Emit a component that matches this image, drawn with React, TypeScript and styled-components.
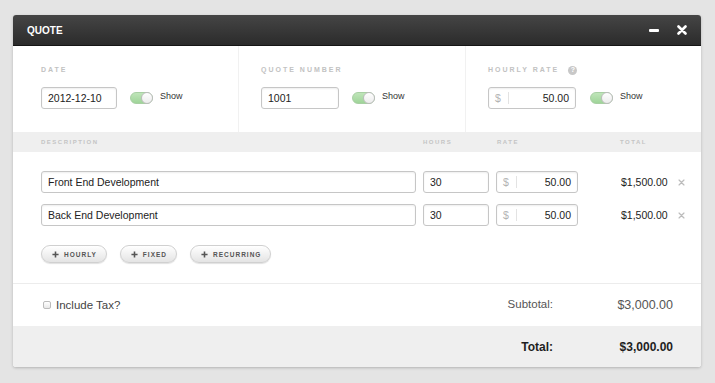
import React from 'react';
import styled, { createGlobalStyle } from 'styled-components';

const GlobalStyle = createGlobalStyle`
	body {
		margin: 0;
		background: #e4e4e4;
		font-family: 'Liberation Sans', Arial, sans-serif;
	}
`;

const Page = styled.div`
	padding: 15px 14px 16px 13px;
`;

const Window = styled.div`
	width: 688px;
	background: #fff;
	border-radius: 3px;
	box-shadow: 0 1px 3px rgba(0, 0, 0, 0.22);
	overflow: hidden;
`;

const TitleBar = styled.div`
	box-sizing: border-box;
	height: 31px;
	display: flex;
	align-items: center;
	justify-content: space-between;
	padding: 0 14px;
	background: linear-gradient(#454545, #2b2b2b);
	border-bottom: 1px solid #151515;
`;

const Title = styled.span`
	color: #fff;
	font-size: 10px;
	font-weight: bold;
`;

const WindowControls = styled.div`
	display: flex;
	align-items: center;
	gap: 18px;
`;

const Minimize = styled.span`
	width: 10px;
	height: 3px;
	background: #fff;
	border-radius: 1px;
`;

const TopSection = styled.div`
	display: grid;
	grid-template-columns: 226px 227px 1fr;
	height: 86px;
`;

const SettingColumn = styled.div<{ $pad: number; $last?: boolean }>`
	box-sizing: border-box;
	padding: 20px 0 0 ${(p) => p.$pad}px;
	border-right: ${(p) => (p.$last ? 'none' : '1px solid #f1f1f1')};
`;

const FieldLabel = styled.div`
	display: flex;
	align-items: center;
	gap: 9px;
	height: 8px;
	line-height: 8px;
	margin-bottom: 13px;
	font-size: 7px;
	font-weight: bold;
	letter-spacing: 2px;
	color: #c2c2c2;
`;

const HelpIcon = styled.span`
	width: 9px;
	height: 9px;
	border-radius: 50%;
	background: #c8c8c8;
	color: #fff;
	font-size: 7px;
	letter-spacing: 0;
	display: flex;
	align-items: center;
	justify-content: center;
`;

const FieldRow = styled.div`
	display: flex;
	align-items: center;
`;

const TextInput = styled.input<{ $w: number }>`
	box-sizing: border-box;
	width: ${(p) => p.$w}px;
	height: 22px;
	border: 1px solid #c6c6c6;
	border-radius: 3px;
	padding: 0 6px;
	font-family: inherit;
	font-size: 10.5px;
	color: #222;
	box-shadow: inset 0 1px 2px rgba(0, 0, 0, 0.07);
	outline: none;
`;

const MoneyBox = styled.div<{ $w: number }>`
	box-sizing: border-box;
	width: ${(p) => p.$w}px;
	height: 22px;
	display: flex;
	align-items: center;
	border: 1px solid #c6c6c6;
	border-radius: 3px;
	box-shadow: inset 0 1px 2px rgba(0, 0, 0, 0.07);
	font-size: 10.5px;
`;

const Currency = styled.span`
	box-sizing: border-box;
	width: 20px;
	padding-left: 6px;
	color: #b3b3b3;
	border-right: 1px solid #e3e3e3;
	line-height: 12px;
`;

const MoneyValue = styled.span`
	flex: 1;
	text-align: right;
	padding-right: 6px;
	color: #222;
`;

const Toggle = styled.span<{ $gap: number }>`
	position: relative;
	box-sizing: border-box;
	margin-left: ${(p) => p.$gap}px;
	width: 23px;
	height: 12px;
	border-radius: 6px;
	background: linear-gradient(#bfe5b9, #9fd499);
	border: 1px solid #a8cfa3;
`;

const Knob = styled.span`
	position: absolute;
	right: -1px;
	top: -1px;
	box-sizing: border-box;
	width: 12px;
	height: 12px;
	border-radius: 50%;
	background: linear-gradient(#fff, #ececec);
	border: 1px solid #bdbdbd;
`;

const ShowText = styled.span`
	margin-left: 7px;
	margin-top: -4px;
	font-size: 9px;
	color: #333;
`;

const LineGrid = styled.div`
	display: grid;
	grid-template-columns: 375px 66px 82px 1fr 23px;
	column-gap: 7px;
	align-items: center;
	padding-left: 28px;
`;

const TableHead = styled(LineGrid)`
	height: 20px;
	background: #efefef;
`;

const HeadLabel = styled.span<{ $indent?: number }>`
	padding-left: ${(p) => p.$indent || 0}px;
	font-size: 6px;
	font-weight: bold;
	letter-spacing: 1.5px;
	color: #c4c4c4;
`;

const ItemsSection = styled.div`
	padding: 19px 0 20px;
`;

const ItemList = styled.div`
	display: flex;
	flex-direction: column;
	gap: 11px;
`;

const LineRow = styled(LineGrid)`
	height: 22px;
`;

const LineTotal = styled.span`
	padding-left: 36px;
	font-size: 10.5px;
	color: #222;
`;

const RemoveButton = styled.span`
	display: flex;
	align-items: center;
`;

const ButtonBar = styled.div`
	display: flex;
	gap: 13px;
	padding: 19px 0 0 28px;
`;

const AddButton = styled.span`
	box-sizing: border-box;
	height: 18px;
	display: inline-flex;
	align-items: center;
	gap: 5px;
	padding: 0 9px 0 10px;
	border-radius: 9px;
	border: 1px solid #d0d0d0;
	background: linear-gradient(#ffffff, #e4e4e4);
	box-shadow: 0 1px 1px rgba(0, 0, 0, 0.12);
	font-size: 6.5px;
	font-weight: bold;
	letter-spacing: 1px;
	color: #555;
`;

const SumRow = styled.div<{ $shaded?: boolean }>`
	box-sizing: border-box;
	height: ${(p) => (p.$shaded ? 41 : 43)}px;
	display: flex;
	align-items: center;
	justify-content: space-between;
	padding: 0 28px 0 30px;
	background: ${(p) => (p.$shaded ? '#efefef' : '#fff')};
	border-top: ${(p) => (p.$shaded ? 'none' : '1px solid #ececec')};
`;

const TaxOption = styled.label`
	display: flex;
	align-items: center;
	gap: 5px;
	font-size: 11.5px;
	color: #444;
`;

const CheckBox = styled.input`
	appearance: none;
	margin: 0;
	width: 8px;
	height: 8px;
	border: 1px solid #bbb;
	border-radius: 2px;
	background: linear-gradient(#fff, #e8e8e8);
`;

const Sums = styled.div<{ $bold?: boolean }>`
	margin-left: auto;
	display: grid;
	grid-template-columns: auto 120px;
	text-align: right;
	font-size: ${(p) => (p.$bold ? 12 : 11.5)}px;
	font-weight: ${(p) => (p.$bold ? 'bold' : 'normal')};
	color: ${(p) => (p.$bold ? '#1e1e1e' : '#555')};
`;

const SumValue = styled.span<{ $size?: number }>`
	font-size: ${(p) => p.$size || 12}px;
`;

const CloseIcon = ({ size, color, weight }: { size: number; color: string; weight: number }) => (
	<svg width={size} height={size} viewBox="0 0 10 10">
		<path d="M1.5 1.5 L8.5 8.5 M8.5 1.5 L1.5 8.5" stroke={color} strokeWidth={weight} strokeLinecap="round" />
	</svg>
);

const PlusIcon = () => (
	<svg width="7" height="7" viewBox="0 0 8 8">
		<path d="M4 0.5 V7.5 M0.5 4 H7.5" stroke="#555" strokeWidth="1.8" />
	</svg>
);

const items = [
	{ description: 'Front End Development', hours: '30', rate: '50.00', total: '$1,500.00' },
	{ description: 'Back End Development', hours: '30', rate: '50.00', total: '$1,500.00' },
];

const ShowToggle = ({ gap }: { gap: number }) => (
	<>
		<Toggle $gap={gap}>
			<Knob />
		</Toggle>
		<ShowText>Show</ShowText>
	</>
);

export default function App() {
	return (
		<Page>
			<GlobalStyle />
			<Window>
				<TitleBar>
					<Title>QUOTE</Title>
					<WindowControls>
						<Minimize />
						<CloseIcon size={10} color="#fff" weight={2.6} />
					</WindowControls>
				</TitleBar>

				<TopSection>
					<SettingColumn $pad={28}>
						<FieldLabel>DATE</FieldLabel>
						<FieldRow>
							<TextInput $w={76} defaultValue="2012-12-10" />
							<ShowToggle gap={13} />
						</FieldRow>
					</SettingColumn>
					<SettingColumn $pad={22}>
						<FieldLabel>QUOTE NUMBER</FieldLabel>
						<FieldRow>
							<TextInput $w={78} defaultValue="1001" />
							<ShowToggle gap={13} />
						</FieldRow>
					</SettingColumn>
					<SettingColumn $pad={22} $last>
						<FieldLabel>
							HOURLY RATE
							<HelpIcon>?</HelpIcon>
						</FieldLabel>
						<FieldRow>
							<MoneyBox $w={88}>
								<Currency>$</Currency>
								<MoneyValue>50.00</MoneyValue>
							</MoneyBox>
							<ShowToggle gap={14} />
						</FieldRow>
					</SettingColumn>
				</TopSection>

				<TableHead>
					<HeadLabel>DESCRIPTION</HeadLabel>
					<HeadLabel>HOURS</HeadLabel>
					<HeadLabel $indent={1}>RATE</HeadLabel>
					<HeadLabel $indent={35}>TOTAL</HeadLabel>
					<span />
				</TableHead>

				<ItemsSection>
					<ItemList>
						{items.map((item) => (
							<LineRow key={item.description}>
								<TextInput $w={375} defaultValue={item.description} />
								<TextInput $w={66} defaultValue={item.hours} />
								<MoneyBox $w={82}>
									<Currency>$</Currency>
									<MoneyValue>{item.rate}</MoneyValue>
								</MoneyBox>
								<LineTotal>{item.total}</LineTotal>
								<RemoveButton>
									<CloseIcon size={7} color="#bcbcbc" weight={1.8} />
								</RemoveButton>
							</LineRow>
						))}
					</ItemList>
					<ButtonBar>
						{['HOURLY', 'FIXED', 'RECURRING'].map((label) => (
							<AddButton key={label}>
								<PlusIcon />
								{label}
							</AddButton>
						))}
					</ButtonBar>
				</ItemsSection>

				<SumRow>
					<TaxOption>
						<CheckBox type="checkbox" />
						Include Tax?
					</TaxOption>
					<Sums>
						<span>Subtotal:</span>
						<SumValue $size={12.5}>$3,000.00</SumValue>
					</Sums>
				</SumRow>
				<SumRow $shaded>
					<Sums $bold>
						<span>Total:</span>
						<SumValue>$3,000.00</SumValue>
					</Sums>
				</SumRow>
			</Window>
		</Page>
	);
}
